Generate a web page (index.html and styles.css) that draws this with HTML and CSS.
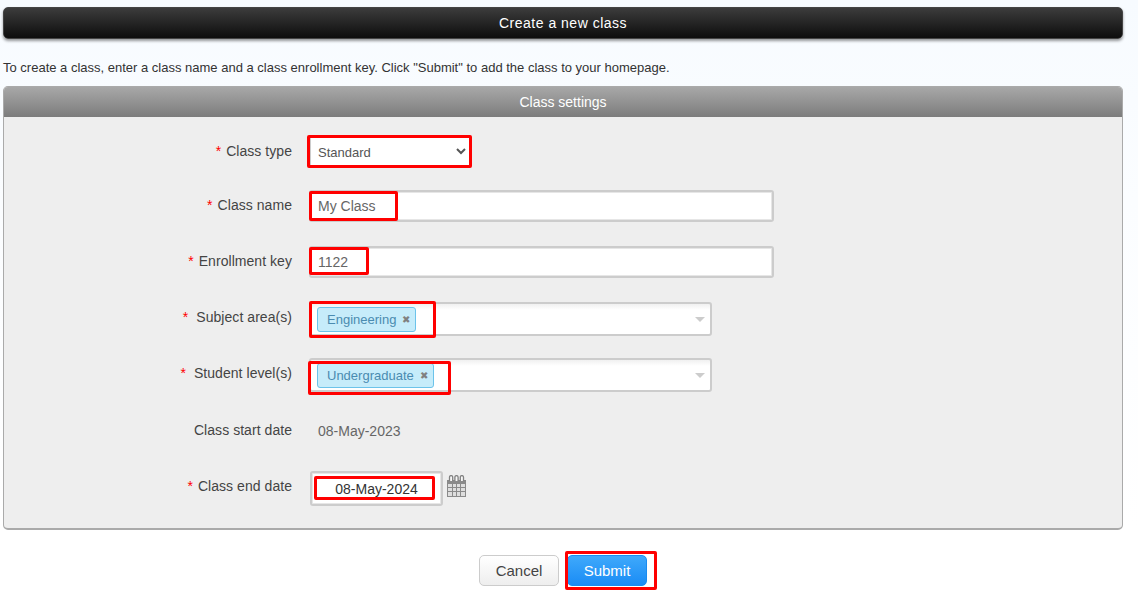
FILE: index.html
```html
<!DOCTYPE html>
<html lang="en">
<head>
<meta charset="utf-8">
<title>Create a new class</title>
<link rel="stylesheet" href="styles.css">
</head>
<body>
<div class="page">
  <h1 class="title-bar">Create a new class</h1>
  <p class="intro">To create a class, enter a class name and a class enrollment key. Click "Submit" to add the class to your homepage.</p>
  <section class="panel">
    <h2 class="panel-head">Class settings</h2>
    <form class="panel-body">
      <div class="row row-type">
        <label class="label"><span class="req">*</span>Class type</label>
        <div class="control">
          <select class="select"><option>Standard</option></select>
          <span class="mark mark-type"></span>
        </div>
      </div>
      <div class="row">
        <label class="label"><span class="req">*</span>Class name</label>
        <div class="control">
          <input class="input" type="text" value="My Class">
          <span class="mark mark-name"></span>
        </div>
      </div>
      <div class="row">
        <label class="label"><span class="req">*</span>Enrollment key</label>
        <div class="control">
          <input class="input" type="text" value="1122">
          <span class="mark mark-key"></span>
        </div>
      </div>
      <div class="row">
        <label class="label"><span class="req req-wide">*</span>Subject area(s)</label>
        <div class="control">
          <div class="chosen">
            <span class="tag">Engineering<span class="tag-x">✖</span></span>
            <span class="caret"></span>
          </div>
          <span class="mark mark-subject"></span>
        </div>
      </div>
      <div class="row">
        <label class="label"><span class="req req-wide">*</span>Student level(s)</label>
        <div class="control">
          <div class="chosen">
            <span class="tag">Undergraduate<span class="tag-x">✖</span></span>
            <span class="caret"></span>
          </div>
          <span class="mark mark-level"></span>
        </div>
      </div>
      <div class="row row-start">
        <label class="label">Class start date</label>
        <div class="control"><span class="date-text">08-May-2023</span></div>
      </div>
      <div class="row row-end">
        <label class="label"><span class="req">*</span>Class end date</label>
        <div class="control control-date">
          <input class="input date-input" type="text" value="08-May-2024">
          <svg class="cal" width="19" height="22" viewBox="0 0 19 22" aria-hidden="true">
            <path d="M0 5h19v17H0z" fill="#8a8a8a"/>
            <path d="M1 9h4v3H1zM6 9h3v3H6zM10 9h3v3h-3zM14 9h4v3h-4zM1 13h4v3H1zM6 13h3v3H6zM10 13h3v3h-3zM14 13h4v3h-4zM1 17h4v4H1zM6 17h3v4H6zM10 17h3v4h-3zM14 17h4v4h-4z" fill="#dedede"/>
            <path d="M2.500 6V2.200a1.600 1.600 0 0 1 3.200 0V6M7.900 6V2.200a1.600 1.600 0 0 1 3.200 0V6M13.300 6V2.200a1.600 1.600 0 0 1 3.200 0V6" fill="#f7f7f7" stroke="#808080" stroke-width="1.300"/>
          </svg>
          <span class="mark mark-end"></span>
        </div>
      </div>
    </form>
  </section>
  <div class="actions">
    <button class="btn btn-cancel" type="button">Cancel</button>
    <span class="submit-wrap">
      <button class="btn btn-submit" type="button">Submit</button>
      <span class="mark mark-submit"></span>
    </span>
  </div>
</div>
</body>
</html>
```
FILE: styles.css
```css
* { box-sizing: border-box; }
html, body { margin: 0; height: 100%; }
body {
  background: linear-gradient(#f7fbff 0, #fbfdff 200px, #fff 530px);
  font-family: "Liberation Sans", Arial, sans-serif;
  font-size: 14px;
  color: #3f3f46;
  overflow: hidden;
}
.page { padding: 7px 15px 0 3px; }

.title-bar {
  margin: 0;
  height: 32px;
  line-height: 31px;
  text-align: center;
  font-size: 14px;
  font-weight: normal;
  letter-spacing: .5px;
  color: #fff;
  border: 1px solid #444;
  border-radius: 5px;
  background: linear-gradient(#3c3c3c, #0d0d0d);
  box-shadow: 0 2px 3px rgba(0,0,0,.4);
}
.intro {
  margin: 0;
  padding-top: 21px;
  height: 47px;
  line-height: 16px;
  font-size: 13px;
  color: #333;
}
.panel {
  height: 444px;
  border: 1px solid #aaa;
  border-bottom-width: 2px;
  border-radius: 5px;
  background: #eee;
  overflow: hidden;
}
.panel-head {
  margin: 0;
  height: 30px;
  line-height: 30px;
  text-align: center;
  font-size: 14px;
  font-weight: normal;
  color: #fff;
  background: linear-gradient(#a8a8a8, #7c7c7c);
}
.panel-body { padding-top: 18px; }

.row { display: flex; height: 56px; }
.row-type { height: 55px; }
.row-start { height: 57px; }
.row-end { height: 35px; }

.label {
  width: 288px;
  flex: none;
  padding-top: 7px;
  line-height: 16px;
  text-align: right;
  color: #444;
  letter-spacing: .05px;
}
.row-type .label { padding-top: 8px; }
.row-start .label { padding-top: 8px; }
.req { color: #f00; margin-right: 5px; }
.req-wide { margin-right: 8px; }
.control { position: relative; margin-left: 17px; }

.select {
  display: block;
  width: 164px;
  height: 33px;
  margin-left: -1px;
  padding: 2px 4px 0 3px;
  border: 3px solid #ccc;
  border-radius: 3px;
  background: #fff;
  font: 13px "Liberation Sans", Arial, sans-serif;
  color: #555;
}
.input {
  display: block;
  width: 465px;
  height: 32px;
  padding: 0 7px;
  border: 2px solid #ccc;
  border-radius: 3px;
  background: #fff;
  box-shadow: inset 0 0 0 1px #e6e6e6;
  font: 14px "Liberation Sans", Arial, sans-serif;
  color: #666;
}
.chosen {
  display: flex;
  align-items: center;
  position: relative;
  width: 403px;
  height: 34px;
  padding-left: 6px;
  border: 2px solid #ccc;
  border-radius: 3px;
  background: linear-gradient(#f0f0f0, #fff 6px);
}
.tag {
  display: flex;
  align-items: center;
  height: 25px;
  padding: 0 5px 0 9px;
  border: 1px solid #6cc3ea;
  border-radius: 3px;
  background: #c6ecfa;
  font-size: 13px;
  color: #4a8bb0;
}
.tag-x { margin-left: 6px; font-size: 10px; color: #808080; }
.caret {
  position: absolute;
  right: 5px;
  top: 13px;
  border-left: 5px solid transparent;
  border-right: 5px solid transparent;
  border-top: 5px solid #ccc;
}
.date-text {
  display: block;
  margin-left: 9px;
  padding-top: 9px;
  line-height: 16px;
  color: #666;
}
.control-date { display: flex; margin-left: 18px; }
.date-input {
  width: 133px;
  height: 35px;
  text-align: center;
  color: #333;
}
.cal { margin: 4px 0 0 4px; }

.mark { position: absolute; display: block; border: 3px solid #f00; border-radius: 2px; pointer-events: none; }
.mark-type { left: -2px; top: 0; width: 165px; height: 33px; }
.mark-name { left: 0; top: 1px; width: 89px; height: 30px; }
.mark-key { left: 0; top: 1px; width: 60px; height: 28px; }
.mark-subject { left: 0; top: -1px; width: 127px; height: 37px; }
.mark-level { left: -1px; top: 3px; width: 143px; height: 34px; }
.mark-end { left: 4px; top: 5px; width: 121px; height: 24px; }
.mark-submit { left: -2px; top: -4px; width: 92px; height: 39px; }

.actions {
  display: flex;
  justify-content: center;
  gap: 8px;
  padding: 25px 0 0 0;
}
.btn {
  display: block;
  width: 80px;
  height: 31px;
  padding: 0;
  border-radius: 5px;
  font: 15px "Liberation Sans", Arial, sans-serif;
}
.btn-cancel {
  border: 1px solid #ccc;
  background: linear-gradient(#fff, #eee);
  color: #444;
}
.btn-submit {
  border: 1px solid #1a8cf0;
  background: linear-gradient(#3fa9fb, #1a8cf5);
  color: #fff;
}
.submit-wrap { position: relative; display: block; }
```
